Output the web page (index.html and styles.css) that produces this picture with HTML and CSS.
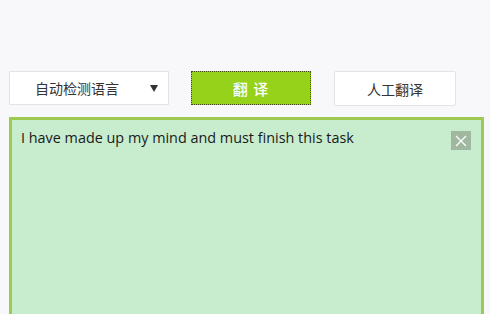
FILE: index.html
```html
<!DOCTYPE html>
<html>
<head>
<meta charset="utf-8">
<link rel="stylesheet" href="styles.css">
</head>
<body>
<div class="page">
  <div class="toolbar">
    <div class="select">
      <span class="select-label">自动检测语言</span>
      <span class="caret"></span>
    </div>
    <div class="translate-btn">翻 译</div>
    <div class="human-btn">人工翻译</div>
  </div>
  <div class="editor">
    <div class="editor-text">I have made up my mind and must finish this task</div>
    <div class="close-btn">
      <svg width="12" height="12" viewBox="0 0 12 12"><path d="M1 1L11 11M11 1L1 11" stroke="#ffffff" stroke-width="1.3" fill="none"/></svg>
    </div>
  </div>
</div>
</body>
</html>
```
FILE: styles.css
```css
html, body {
  margin: 0;
  padding: 0;
  background: #f8f7fa;
  overflow: hidden;
}
.page {
  width: 490px;
  height: 314px;
  padding-top: 71px;
  box-sizing: border-box;
  font-family: "Noto Sans CJK SC", "Open Sans", sans-serif;
}
.toolbar {
  display: flex;
  align-items: flex-start;
  padding-left: 9px;
  height: 46px;
}
.select {
  width: 160px;
  height: 34px;
  box-sizing: border-box;
  background: #ffffff;
  border: 1px solid #e3e2e6;
  display: flex;
  align-items: center;
  position: relative;
}
.select-label {
  font-size: 14px;
  color: #333333;
  margin-left: 25px;
  line-height: 1;
}
.caret {
  position: absolute;
  right: 10px;
  top: 13px;
  width: 0;
  height: 0;
  border-left: 4px solid transparent;
  border-right: 4px solid transparent;
  border-top: 7px solid #333333;
}
.translate-btn {
  margin-left: 22px;
  width: 120px;
  height: 34px;
  box-sizing: border-box;
  background: #96d21a;
  border: 1px dotted #3a4a10;
  color: #ffffff;
  font-size: 15px;
  font-weight: 500;
  display: flex;
  align-items: center;
  justify-content: center;
  letter-spacing: 1px;
}
.human-btn {
  margin-left: 23px;
  width: 122px;
  height: 35px;
  box-sizing: border-box;
  background: #ffffff;
  border: 1px solid #e3e2e6;
  border-radius: 2px;
  color: #333333;
  font-size: 14px;
  display: flex;
  align-items: center;
  justify-content: center;
}
.editor {
  margin-left: 9px;
  width: 475px;
  height: 200px;
  box-sizing: border-box;
  background: #c8ecce;
  border: 3px solid #9fca52;
  position: relative;
  padding: 8px 0 0 9px;
}
.editor-text {
  font-family: "Open Sans", "Noto Sans", sans-serif;
  font-size: 14.4px;
  color: #1a1a1a;
  line-height: 20px;
}
.close-btn {
  position: absolute;
  right: 10px;
  top: 11px;
  width: 20px;
  height: 19px;
  background: #9fb89f;
  display: flex;
  align-items: center;
  justify-content: center;
}
```
